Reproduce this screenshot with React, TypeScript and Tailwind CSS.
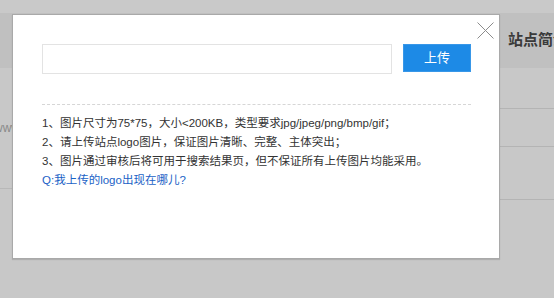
import React from "react";

const font = { fontFamily: '"Liberation Sans", "Noto Sans CJK SC", sans-serif' };

export default function App() {
  return (
    <div className="relative w-[554px] h-[298px] overflow-hidden bg-[#c8c8c8]" style={font}>
      {/* background page */}
      <div className="h-[13px] bg-[#c9c9c9]" />
      <div className="h-[55px] bg-[#c0c0c0] flex">
        <div className="flex-1" />
        <div className="w-[54px] flex items-center pl-[8px] text-[15px] font-bold text-[#3a3a3a] whitespace-nowrap overflow-hidden">
          站点简介
        </div>
      </div>
      <div className="flex">
        <div className="w-[13px] flex flex-col">
          <div className="h-[120px] flex items-center text-[12px] text-[#8a8a8a] overflow-hidden whitespace-nowrap">
            <span className="-ml-[6px]">www</span>
          </div>
          <div className="h-px bg-[#b8b8b8]" />
        </div>
        <div className="flex-1" />
        <div className="w-[54px] flex flex-col">
          <div className="h-[40px]" />
          <div className="h-px bg-[#b4b4b4]" />
          <div className="h-[37px]" />
          <div className="h-px bg-[#b4b4b4]" />
          <div className="h-[52px]" />
          <div className="h-px bg-[#b4b4b4]" />
        </div>
      </div>

      {/* modal */}
      <div className="absolute left-[12px] top-[14px] w-[488px] h-[245px] bg-white border border-[#a9a9a9] shadow-[0_1px_1px_rgba(0,0,0,0.12)]">
        <button className="absolute left-[464px] top-[7px] w-[17px] h-[17px]">
          <svg width="17" height="17" viewBox="0 0 17 17">
            <path d="M0.5 0.5 L16.5 16.5 M16.5 0.5 L0.5 16.5" stroke="#8c8c8c" strokeWidth="1" fill="none" />
          </svg>
        </button>
        <div className="pt-[29px] pl-[29px]">
          <div className="flex items-start gap-[11px]">
            <div className="w-[350px] h-[30px] border border-[#e3e3e3] bg-white" />
            <div className="w-[68px] h-[28px] bg-[#1d8ae6] border border-[#3897e8] flex items-center justify-center text-white text-[13px]">
              上传
            </div>
          </div>
          <div className="mt-[30px] w-[429px] border-t border-dashed border-[#d6d6d6]" />
          <div className="mt-[9px] text-[11.5px] leading-[19px] text-[#333] whitespace-nowrap">
            <div>1、图片尺寸为75*75，大小&lt;200KB，类型要求jpg/jpeg/png/bmp/gif；</div>
            <div>2、请上传站点logo图片，保证图片清晰、完整、主体突出；</div>
            <div>3、图片通过审核后将可用于搜索结果页，但不保证所有上传图片均能采用。</div>
            <div className="text-[#1a62c6]">Q:我上传的logo出现在哪儿?</div>
          </div>
        </div>
      </div>
    </div>
  );
}
